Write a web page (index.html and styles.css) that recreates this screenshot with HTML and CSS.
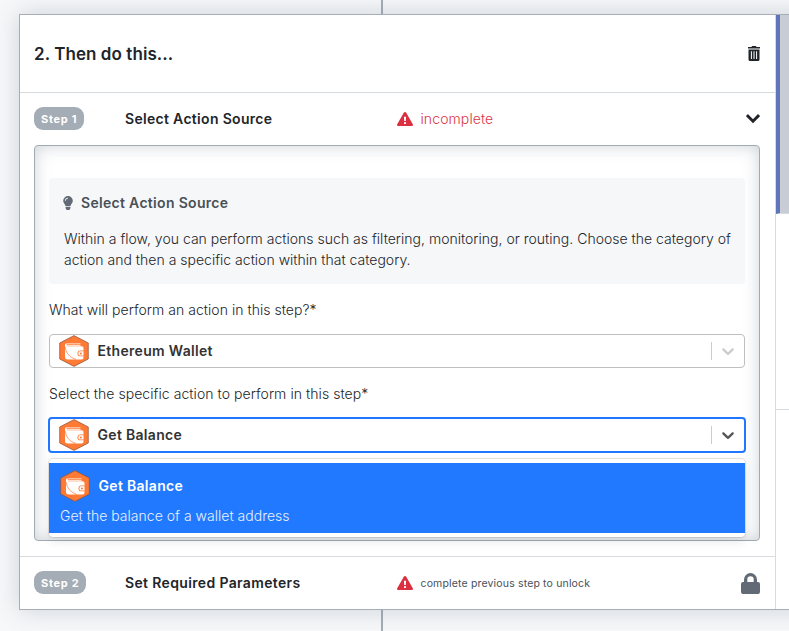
FILE: index.html
```html
<!DOCTYPE html>
<html lang="en">
<head>
<meta charset="utf-8">
<title>Then do this</title>
<link rel="stylesheet" href="styles.css">
</head>
<body>
<svg class="defs" width="0" height="0" aria-hidden="true">
  <symbol id="wallet" viewBox="0 0 30 32">
    <path d="M15 .6 29.300 8v16L15 31.400.700 24V8z" fill="#ff7a35" stroke="#8c5136" stroke-width=".7"/>
    <path d="M6 9.800Q6 8.400 7.500 8.400H21.500V9.300H7.600V10H21.500V10.700H7.600V11.300H22.500Q24.500 11.300 24.500 13V15.500H21Q18.500 15.500 18.500 18.500T21 21.300H24.500V22.500Q24.500 24.500 22.500 24.500H9Q6 24.500 6 22z" fill="#fff"/>
    <path d="M6.200 12Q7.200 21.500 17 24.500" fill="none" stroke="#ff7a35" stroke-width=".7"/>
    <path d="M20.700 16.300H24.500V20.600H20.700Q19.400 20.600 19.400 18.500T20.700 16.300z" fill="#fff"/>
    <circle cx="21.900" cy="18.500" r="1" fill="#ff7a35"/>
  </symbol>
  <symbol id="warning" viewBox="0 0 16 14">
    <path fill="#dc2f3f" fill-rule="evenodd" d="M8 0Q8.800 0 9.200.7L15.800 12.200Q16.500 14 14.800 14H1.200Q-.5 14 .2 12.200L6.800.7Q7.200 0 8 0zM6.900 4.700 7.200 9H8.800L9.100 4.700zM8 9.900A1.150 1.150 0 1 0 8 12.200 1.150 1.150 0 1 0 8 9.900z"/>
  </symbol>
  <symbol id="chevron" viewBox="0 0 20 20">
    <path fill="currentColor" d="M4.516 7.548c.436-.446 1.043-.481 1.576 0L10 11.295l3.908-3.747c.533-.481 1.141-.446 1.574 0 .436.445.408 1.197 0 1.615-.406.418-4.695 4.502-4.695 4.502a1.095 1.095 0 0 1-1.576 0S4.924 9.581 4.516 9.163s-.436-1.170 0-1.615z"/>
  </symbol>
</svg>
<main class="modal">
  <section class="content">
    <header class="head">
      <h1>2. Then do this...</h1>
      <svg class="trash" viewBox="0 0 12 15"><path fill="#212529" fill-rule="evenodd" d="M4 0H8L8.500 1H12V2.500H0V1H3.500zM.5 3.400H11.500V13.500Q11.500 15 10 15H2Q.5 15 .5 13.500zM2.900 5.200V13H3.900V5.200zM5.500 5.200V13H6.500V5.200zM8.100 5.200V13H9.100V5.200z"/></svg>
    </header>
    <div class="step">
      <span class="badge">Step 1</span>
      <h2>Select Action Source</h2>
      <span class="status"><svg class="warn"><use href="#warning"/></svg><span class="error">incomplete</span></span>
      <svg class="collapse" viewBox="0 0 14 10"><path d="M2 2.200 7 7.200 12 2.200" fill="none" stroke="#212529" stroke-width="3" stroke-linecap="square"/></svg>
    </div>
    <div class="panel">
      <div class="info">
        <h3><svg class="bulb" viewBox="0 0 10 14"><path fill="#626b75" fill-rule="evenodd" d="M5 0A4.800 4.800 0 0 1 9.800 4.800C9.800 7 8 8 7.500 10H2.500C2 8 .2 7 .2 4.800A4.800 4.800 0 0 1 5 0zM5 1.700A3.200 3.200 0 0 0 1.900 4.700H2.800A2.300 2.300 0 0 1 5 2.500zM2.600 10.800H7.400V12.300L6.400 14H3.600L2.600 12.300z"/></svg>Select Action Source</h3>
        <p>Within a flow, you can perform actions such as filtering, monitoring, or routing. Choose the category of<br>action and then a specific action within that category.</p>
      </div>
      <label class="label-source">What will perform an action in this step?*</label>
      <div class="select">
        <svg class="wallet"><use href="#wallet"/></svg><strong>Ethereum Wallet</strong>
        <i class="divider"></i><svg class="chevron"><use href="#chevron"/></svg>
      </div>
      <label class="label-action">Select the specific action to perform in this step*</label>
      <div class="select active">
        <svg class="wallet"><use href="#wallet"/></svg><strong>Get Balance</strong>
        <i class="divider"></i><svg class="chevron"><use href="#chevron"/></svg>
        <div class="menu">
          <div class="option">
            <div class="option-title"><svg class="wallet"><use href="#wallet"/></svg><strong>Get Balance</strong></div>
            <p>Get the balance of a wallet address</p>
          </div>
        </div>
      </div>
    </div>
    <div class="step step-locked">
      <span class="badge">Step 2</span>
      <h2>Set Required Parameters</h2>
      <span class="status"><svg class="warn"><use href="#warning"/></svg><span class="locked">complete previous step to unlock</span></span>
      <svg class="lock" viewBox="0 0 19 21"><path fill="#626b75" fill-rule="evenodd" d="M3 9V6.500A6.500 6.500 0 0 1 16 6.500V9H17Q19 9 19 11V19Q19 21 17 21H2Q0 21 0 19V11Q0 9 2 9zM6.300 9H12.700V6.500A3.200 3.200 0 0 0 6.300 6.500z"/></svg>
    </div>
  </section>
  <aside class="side"><div class="tab selected"></div><div class="tab"></div></aside>
</main>
</body>
</html>
```
FILE: styles.css
```css
* { box-sizing: border-box; }
body {
  margin: 0;
  height: 631px;
  overflow: hidden;
  padding: 14px 0 0 19px;
  color: #212529;
  font: 300 14px/21px Inter, sans-serif;
  background: linear-gradient(90deg, transparent 381px, #a5adb6 381px 383px, transparent 383px), #f7f8fa;
}
h1, h2, h3, p { margin: 0; }
svg { display: block; flex: none; }
.defs { position: absolute; }
.modal {
  display: flex;
  width: 800px;
  height: 596px;
  border: 1px solid #a5adb7;
  background: #fff;
  box-shadow: 0 0 24px rgba(72, 91, 109, .24);
}
.content { width: 756px; flex: none; border-right: 1px solid #d8dce1; }
.head {
  display: flex;
  align-items: center;
  justify-content: space-between;
  height: 78px;
  padding: 0 15px 0 14px;
  border-bottom: 1px solid #d5dadf;
}
h1 { font-size: 17px; font-weight: 600; line-height: 24px; letter-spacing: .07px; }
.trash { width: 12px; height: 15px; }
.step {
  display: grid;
  grid-template-columns: 91px 272px 1fr auto;
  align-items: center;
  height: 52px;
  padding: 0 15px 0 14px;
}
.step-locked { margin-top: 15px; border-top: 1px solid #d8dce1; height: 53px; }
.badge {
  justify-self: start;
  margin-bottom: 2px;
  padding: 0 6.5px 0 7px;
  height: 23px;
  border-radius: 9px;
  background: #a4acb5;
  color: #fff;
  font-size: 11px;
  font-weight: 700;
  line-height: 24px;
  letter-spacing: .72px;
}
h2, h3, strong { font-size: 14px; font-weight: 600; line-height: 21px; letter-spacing: .31px; }
h2 { margin-bottom: 2px; }
.step-locked h2 { letter-spacing: .35px; }
.status { display: flex; align-items: center; gap: 7.5px; }
.warn { width: 16px; height: 14px; }
.error { margin-bottom: 2px; color: #dc3545; font-size: 14px; letter-spacing: .1px; }
.locked { font-size: 10.5px; font-weight: 400; letter-spacing: .16px; color: #495057; }
.collapse { width: 14px; height: 10px; }
.lock { width: 19px; height: 21px; }
.panel {
  display: flow-root;
  width: 726px;
  height: 396px;
  margin-left: 14px;
  padding: 32px 14px 0;
  border: 1px solid #a1abb4;
  border-radius: 4px;
  box-shadow: inset 0 0 16px rgba(72, 91, 109, .28);
}
.info { height: 106px; padding: 14px 15px 0 14px; border-radius: 4px; background: #f6f7f9; }
.info h3 { display: flex; align-items: center; gap: 8px; color: #495057; }
.bulb { width: 10px; height: 14px; margin-top: 1px; }
.info p { margin-top: 15px; padding-left: 1px; white-space: nowrap; letter-spacing: .012px; }
label { display: block; height: 21px; }
.label-source { margin-top: 15px; letter-spacing: .035px; }
.label-action { margin-top: 15px; letter-spacing: .06px; }
.select {
  position: relative;
  display: flex;
  align-items: center;
  height: 34px;
  margin-top: 14px;
  padding: 0 6px 0 9px;
  border: 1px solid #bfbfbf;
  border-radius: 4px;
  background: #fff;
  color: #333;
}
.active { height: 36px; margin: 13px -1px 0; border: 2px solid #2176ff; }
.wallet { width: 30px; height: 32px; }
.select strong { margin: 0 0 2px 8.5px; }
.divider { width: 1px; height: 18px; margin-left: auto; margin-right: 6px; background: #ccc; }
.chevron { width: 20px; height: 20px; color: #ccc; }
.active .chevron { color: #555; }
.menu {
  position: absolute;
  z-index: 2;
  top: 40px;
  left: -1px;
  right: -1px;
  height: 78px;
  padding: 4px 0;
  border-radius: 4px;
  background: #fff;
  box-shadow: 0 0 0 1px rgba(0, 0, 0, .1), 0 4px 11px rgba(0, 0, 0, .1);
}
.option { height: 70px; padding: 7px 11px; background: #2179ff; color: #fff; }
.option-title { display: flex; align-items: center; height: 32px; }
.option p { margin-top: 3px; opacity: .9; letter-spacing: .02px; }
.side { flex: 1; }
.tab { height: 196px; border-bottom: 1px solid #d5dadf; }
.selected { height: 199px; border-left: 4px solid #5c76b9; background: #c8cdd5; }
```
